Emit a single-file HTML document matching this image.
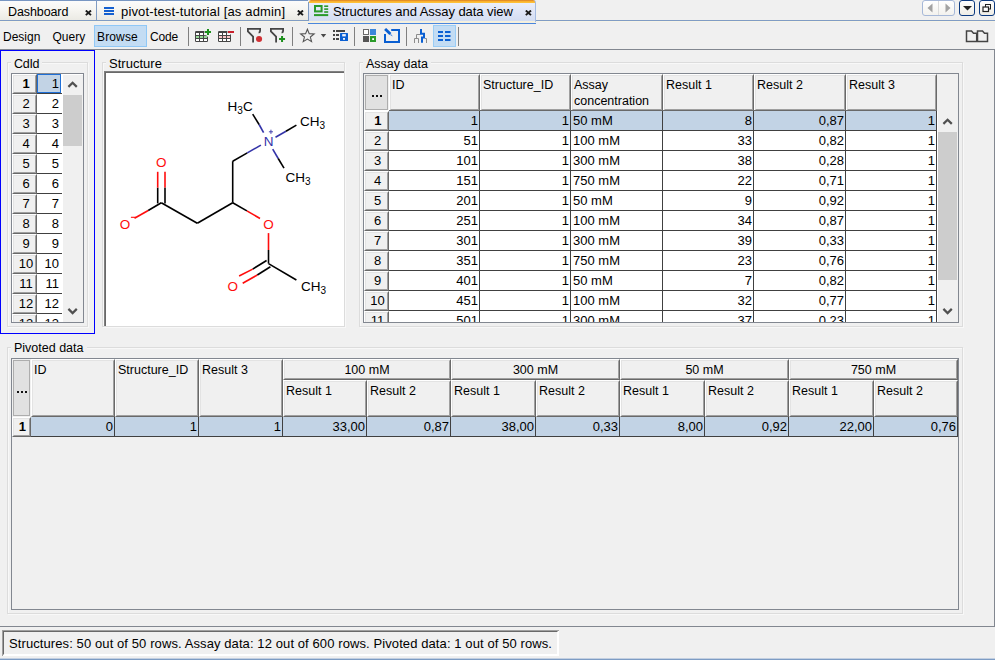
<!DOCTYPE html><html><head><meta charset="utf-8"><title>Structures and Assay data view</title><style>
*{box-sizing:border-box;margin:0;padding:0}
html,body{width:995px;height:660px;overflow:hidden;background:#f0f0f0}
body{font-family:"Liberation Sans",sans-serif;font-size:13px;color:#000;position:relative}
.a{position:absolute}
.t{position:absolute;white-space:pre;line-height:16px;height:16px}
.hl{position:absolute;height:1px}
.vl{position:absolute;width:1px}
.rh{position:absolute;background:#f0f0f0;border-top:1px solid #fff;border-left:1px solid #fff;border-right:1px solid #696969;border-bottom:1px solid #696969}
.rh:before{content:"";position:absolute;left:0;top:0;right:0;bottom:0;border-top:1px solid #e3e3e3;border-left:1px solid #e3e3e3;border-right:1px solid #a0a0a0;border-bottom:1px solid #a0a0a0}
.rh span{position:absolute;left:0;right:0;text-align:center;white-space:pre}
.sel{position:absolute;background:#c2d3e5}
.num{position:absolute;text-align:right;white-space:pre;line-height:16px;height:16px}
.sep{position:absolute;width:1px;background:#808080;top:27px;height:19px}
</style></head><body>
<div class="a" style="left:0;top:0;width:308px;height:20px;background:linear-gradient(#fcfcfc,#f6f5f1 50%,#ebeae4)"></div>
<div class="hl" style="left:0;top:0;width:308px;background:#7896c2"></div>
<div class="hl" style="left:0;top:20px;width:308px;background:#809cc4"></div>
<div class="hl" style="left:536px;top:20px;width:459px;background:#809cc4"></div>
<div class="hl" style="left:0;top:21px;width:995px;background:#f7f4e6"></div>
<div class="vl" style="left:96px;top:0;height:20px;background:#809cc4"></div>
<div class="a" style="left:308px;top:0;width:228px;height:22px;border-radius:3px 3px 0 0;background:linear-gradient(#df8826 0,#e8952a 1px,#fdb830 1.6px,#fdc43c 3px,#eaeefa 3px,#dfe5f6 12px,#d3ddf2 21px,#f5f0dc 21px);border-left:1px solid #e4e9f7;border-right:1px solid #a4bbe2"></div>
<div class="vl" style="left:308px;top:2px;height:19px;background:#7e9bc3"></div>
<div class="hl" style="left:308px;top:23px;width:228px;height:1px;background:#4a86dc"></div>
<div class="hl" style="left:308px;top:22px;width:228px;height:1px;background:#f4efdf"></div>
<div class="t" style="left:8px;top:3.5px;font-size:12.5px;letter-spacing:-0.1px">Dashboard</div>
<div class="t" style="left:121px;top:3.5px;font-size:13px;letter-spacing:0.15px">pivot-test-tutorial [as admin]</div>
<div class="t" style="left:333px;top:3.5px;font-size:13px;letter-spacing:-0.05px">Structures and Assay data view</div>
<svg class="a" style="left:85.0px;top:9.9px" width="7" height="6" viewBox="0 0 7 6"><path d="M0.8 0.5L6.0 5.1M6.0 0.5L0.8 5.1" stroke="#1a1a1a" stroke-width="1.9" fill="none"/></svg>
<svg class="a" style="left:297.0px;top:9.9px" width="7" height="6" viewBox="0 0 7 6"><path d="M0.8 0.5L6.0 5.1M6.0 0.5L0.8 5.1" stroke="#1a1a1a" stroke-width="1.9" fill="none"/></svg>
<svg class="a" style="left:524.8px;top:9.9px" width="7" height="6" viewBox="0 0 7 6"><path d="M0.8 0.5L6.0 5.1M6.0 0.5L0.8 5.1" stroke="#1a1a1a" stroke-width="1.9" fill="none"/></svg>
<svg class="a" style="left:104px;top:7px" width="10" height="8"><rect x="0" y="0" width="10" height="2" fill="#1560d0"/><rect x="0" y="3" width="10" height="2" fill="#1560d0"/><rect x="0" y="6" width="10" height="2" fill="#1560d0"/></svg>
<svg class="a" style="left:314px;top:5px" width="15" height="12"><rect x="1" y="1" width="6.6" height="5.4" fill="none" stroke="#2a9a2a" stroke-width="2"/><rect x="10.2" y="0.4" width="4" height="1.6" fill="#2a9a2a"/><rect x="10.2" y="3.3" width="4" height="1.6" fill="#2a9a2a"/><rect x="10.2" y="6.2" width="4" height="1.6" fill="#2a9a2a"/><rect x="0" y="9.1" width="14.2" height="2" fill="#2a9a2a"/></svg>
<div class="a" style="left:922px;top:0;width:33px;height:16px;border:1px solid #a6b8d8;border-radius:3px;background:linear-gradient(#fff,#f3f2ee)"></div>
<div class="vl" style="left:938px;top:1px;height:14px;background:#dcdcdc"></div>
<svg class="a" style="left:927px;top:3px" width="6" height="10"><path d="M5.5 0.5L0.5 5L5.5 9.5Z" fill="#a2a2a2"/></svg>
<svg class="a" style="left:945px;top:3px" width="6" height="10"><path d="M0.5 0.5L5.5 5L0.5 9.5Z" fill="#a2a2a2"/></svg>
<div class="a" style="left:959px;top:0;width:16px;height:16px;border:1px solid #0c3a80;border-radius:3px;background:linear-gradient(#fff,#efede6)"></div>
<svg class="a" style="left:962.5px;top:6px" width="9" height="5"><path d="M0 0H9L4.5 4.5Z" fill="#222"/></svg>
<div class="a" style="left:979px;top:0;width:16px;height:16px;border:1px solid #0c3a80;border-radius:3px;background:linear-gradient(#fff,#efede6)"></div>
<svg class="a" style="left:982px;top:3px" width="10" height="10"><rect x="3.5" y="1.5" width="5" height="4.5" fill="none" stroke="#222" stroke-width="1"/><rect x="1" y="4" width="5.5" height="4.5" fill="#fff" stroke="#222" stroke-width="1.2"/></svg>
<div class="hl" style="left:0;top:49px;width:995px;background:#828790"></div>
<div class="a" style="left:94px;top:25px;width:53px;height:22px;background:#c3dcf3;border:1px solid #90c8f6"></div>
<div class="t" style="left:3px;top:29px;font-size:12px">Design</div>
<div class="t" style="left:52.5px;top:29px;font-size:12px">Query</div>
<div class="t" style="left:97px;top:29px;font-size:12px;letter-spacing:0.15px">Browse</div>
<div class="t" style="left:150px;top:29px;font-size:12px;letter-spacing:-0.2px">Code</div>
<div class="sep" style="left:188px"></div>
<div class="sep" style="left:240px"></div>
<div class="sep" style="left:292px"></div>
<div class="sep" style="left:354px"></div>
<div class="sep" style="left:406px"></div>
<div class="sep" style="left:458px"></div>
<svg class="a" style="left:195px;top:29px" width="17" height="14" viewBox="0 0 17 14"><rect x="0" y="2" width="13" height="11" rx="1.2" fill="#454545"/><rect x="1" y="4" width="3" height="2" fill="#fff"/><rect x="1" y="7" width="3" height="2" fill="#98d898"/><rect x="1" y="10" width="3" height="2" fill="#fff"/><rect x="5" y="4" width="3" height="2" fill="#fff"/><rect x="5" y="7" width="3" height="2" fill="#98d898"/><rect x="5" y="10" width="3" height="2" fill="#fff"/><rect x="9" y="4" width="3" height="2" fill="#fff"/><rect x="9" y="7" width="3" height="2" fill="#98d898"/><rect x="9" y="10" width="3" height="2" fill="#fff"/><path d="M9.4 0H17V8.4H13.4L11.2 6.3H9.4Z" fill="#f0f0f0"/><path d="M13 0V6M10 3H16" stroke="#1c8f1c" stroke-width="2" fill="none"/></svg>
<svg class="a" style="left:218px;top:29px" width="17" height="14" viewBox="0 0 17 14"><rect x="0" y="2" width="13" height="11" rx="1.2" fill="#454545"/><rect x="1" y="4" width="3" height="2" fill="#fff"/><rect x="1" y="7" width="3" height="2" fill="#f8c6c6"/><rect x="1" y="10" width="3" height="2" fill="#fff"/><rect x="5" y="4" width="3" height="2" fill="#fff"/><rect x="5" y="7" width="3" height="2" fill="#f8c6c6"/><rect x="5" y="10" width="3" height="2" fill="#fff"/><rect x="9" y="4" width="3" height="2" fill="#fff"/><rect x="9" y="7" width="3" height="2" fill="#f8c6c6"/><rect x="9" y="10" width="3" height="2" fill="#fff"/><path d="M9.4 0H17V6.4H13.2L12.2 5H9.4Z" fill="#f0f0f0"/><rect x="10" y="2" width="6" height="2" fill="#c8202c"/></svg>
<svg class="a" style="left:247px;top:28px" width="17" height="16" viewBox="0 0 17 16"><path d="M11.6 4.7C13.3 4.5 13.1 3.4 13.1 2.8V0.9H0.9V3.3L6.1 8.5V14.4" stroke="#454545" stroke-width="1.8" fill="none" stroke-linejoin="miter"/><circle cx="12.05" cy="10.95" r="3.05" fill="#d03034"/></svg>
<svg class="a" style="left:270px;top:28px" width="17" height="16" viewBox="0 0 17 16"><path d="M11.6 4.7C13.3 4.5 13.1 3.4 13.1 2.8V0.9H0.9V3.3L6.1 8.5V14.4" stroke="#454545" stroke-width="1.8" fill="none" stroke-linejoin="miter"/><path d="M12.05 8V14M9.05 11H15.05" stroke="#1c8f1c" stroke-width="2" fill="none"/></svg>
<svg class="a" style="left:299px;top:28px" width="17" height="16" viewBox="0 0 17 16"><path d="M8.40 1.21L10.22 5.67L15.15 5.97L11.35 9.03L12.57 13.67L8.40 11.11L4.23 13.67L5.45 9.03L1.65 5.97L6.58 5.67Z" fill="none" stroke="#555" stroke-width="1.1" stroke-linejoin="miter"/></svg>
<svg class="a" style="left:320px;top:33px" width="7" height="6" viewBox="0 0 7 6"><path d="M0.8 1.1H6.2L3.5 4.4Z" fill="#4a4a4a"/></svg>
<svg class="a" style="left:333px;top:30px" width="16" height="11" viewBox="0 0 16 11"><rect x="0" y="0" width="2" height="2" fill="#454545"/><rect x="3" y="0" width="9" height="2" fill="#454545"/><rect x="0" y="4" width="2" height="2" fill="#454545"/><rect x="3" y="4" width="3" height="2" fill="#454545"/><rect x="0" y="8" width="2" height="2" fill="#454545"/><rect x="3" y="8" width="3" height="2" fill="#454545"/><rect x="7" y="3" width="8" height="8" rx="0.5" fill="#0a5fd2"/><rect x="9.2" y="4.1" width="3.6" height="2.3" fill="#eef3fc"/><rect x="10" y="8" width="2" height="1.8" fill="#eef3fc"/></svg>
<svg class="a" style="left:363px;top:29px" width="13" height="13" viewBox="0 0 13 13"><rect x="0.5" y="0.5" width="5" height="5" fill="#fff" stroke="#6a6a6a" stroke-width="1"/><rect x="7" y="0" width="6" height="6" fill="#3b86da"/><rect x="0" y="7" width="6" height="6" fill="#555"/><rect x="7" y="7" width="6" height="6" fill="#2a9a2a"/><rect x="9.2" y="9.2" width="1.8" height="1.8" fill="#fff"/></svg>
<svg class="a" style="left:384px;top:28px" width="17" height="16" viewBox="0 0 17 16"><path d="M7.2 2H15V14H1V6" stroke="#0a5fd2" stroke-width="2" fill="none"/><path d="M1.1 1.0L6.4 6.0" stroke="#0a5fd2" stroke-width="2.9" fill="none"/><path d="M6.9 6.1L8.9 8.6L6.1 6.9Z" fill="#2f7be0"/></svg>
<svg class="a" style="left:414px;top:29px" width="13" height="14" viewBox="0 0 13 14"><path d="M0.5 14V9.5H4.5V14M2.5 9.5V5.5H6M11 9.5H12.5V14" stroke="#8c8c8c" stroke-width="1" fill="none"/><path d="M7 0V5.8M6 4.8H11M10 4.8V9.6M11 8.6H7M8 8V13.8" stroke="#0a5fd2" stroke-width="2" fill="none"/></svg>
<div class="a" style="left:433px;top:25px;width:23px;height:22px;background:#c3dcf3;border:1px solid #9acdf6"></div>
<svg class="a" style="left:438px;top:31px" width="13" height="10" viewBox="0 0 13 10"><rect x="0" y="0" width="5" height="2" fill="#0a5fd2"/><rect x="7" y="0" width="5.5" height="2" fill="#0a5fd2"/><rect x="0" y="4" width="5" height="2" fill="#0a5fd2"/><rect x="7" y="4" width="5.5" height="2" fill="#0a5fd2"/><rect x="0" y="8" width="5" height="2" fill="#0a5fd2"/><rect x="7" y="8" width="5.5" height="2" fill="#0a5fd2"/></svg>
<svg class="a" style="left:965px;top:29px" width="24" height="14" viewBox="0 0 24 14"><path d="M1.5 2H6.5L8.5 4.2H11.7V12.5H1.5ZM12.5 2H17.5L19.5 4.2H22.5V12.5H12.5Z" fill="none" stroke="#444" stroke-width="1.5" stroke-linejoin="miter"/></svg>
<div class="a" style="left:0;top:50px;width:95px;height:284px;border:1px solid #0000ff"></div>
<div class="a" style="left:7px;top:62px;width:81px;height:265px;border:1px solid #dcdcdc;box-shadow:1px 1px 0 #f8f8f8, inset 1px 1px 0 #f8f8f8"></div>
<div class="a" style="left:11px;top:55.5px;width:31px;height:14px;background:#f0f0f0"></div>
<div class="t" style="left:14px;top:55.5px;font-size:12.5px;letter-spacing:-0.3px">CdId</div>
<div class="a" style="left:11px;top:73px;width:73px;height:250px;border:1px solid #828790;background:#fff;overflow:hidden"><div class="a" id="cd" style="left:0;top:0;width:71px;height:248px">
<div class="rh" style="left:0;top:0px;width:25px;height:20px"><span style="top:0.5px;left:3px;line-height:16px;font-weight:bold;">1</span></div>
<div class="a" style="left:25px;top:0px;width:24px;height:19px;background:#c2d3e5;border:1px solid #1f6fd6"></div>
<div class="hl" style="left:25px;top:19px;width:25px;background:#404040"></div>
<div class="num" style="left:25px;top:1.5px;width:22px">1</div>
<div class="rh" style="left:0;top:20px;width:25px;height:20px"><span style="top:0.5px;left:3px;line-height:16px;">2</span></div>
<div class="hl" style="left:25px;top:39px;width:25px;background:#404040"></div>
<div class="num" style="left:25px;top:21.5px;width:22px">2</div>
<div class="rh" style="left:0;top:40px;width:25px;height:20px"><span style="top:0.5px;left:3px;line-height:16px;">3</span></div>
<div class="hl" style="left:25px;top:59px;width:25px;background:#404040"></div>
<div class="num" style="left:25px;top:41.5px;width:22px">3</div>
<div class="rh" style="left:0;top:60px;width:25px;height:20px"><span style="top:0.5px;left:3px;line-height:16px;">4</span></div>
<div class="hl" style="left:25px;top:79px;width:25px;background:#404040"></div>
<div class="num" style="left:25px;top:61.5px;width:22px">4</div>
<div class="rh" style="left:0;top:80px;width:25px;height:20px"><span style="top:0.5px;left:3px;line-height:16px;">5</span></div>
<div class="hl" style="left:25px;top:99px;width:25px;background:#404040"></div>
<div class="num" style="left:25px;top:81.5px;width:22px">5</div>
<div class="rh" style="left:0;top:100px;width:25px;height:20px"><span style="top:0.5px;left:3px;line-height:16px;">6</span></div>
<div class="hl" style="left:25px;top:119px;width:25px;background:#404040"></div>
<div class="num" style="left:25px;top:101.5px;width:22px">6</div>
<div class="rh" style="left:0;top:120px;width:25px;height:20px"><span style="top:0.5px;left:3px;line-height:16px;">7</span></div>
<div class="hl" style="left:25px;top:139px;width:25px;background:#404040"></div>
<div class="num" style="left:25px;top:121.5px;width:22px">7</div>
<div class="rh" style="left:0;top:140px;width:25px;height:20px"><span style="top:0.5px;left:3px;line-height:16px;">8</span></div>
<div class="hl" style="left:25px;top:159px;width:25px;background:#404040"></div>
<div class="num" style="left:25px;top:141.5px;width:22px">8</div>
<div class="rh" style="left:0;top:160px;width:25px;height:20px"><span style="top:0.5px;left:3px;line-height:16px;">9</span></div>
<div class="hl" style="left:25px;top:179px;width:25px;background:#404040"></div>
<div class="num" style="left:25px;top:161.5px;width:22px">9</div>
<div class="rh" style="left:0;top:180px;width:25px;height:20px"><span style="top:0.5px;left:3px;line-height:16px;">10</span></div>
<div class="hl" style="left:25px;top:199px;width:25px;background:#404040"></div>
<div class="num" style="left:25px;top:181.5px;width:22px">10</div>
<div class="rh" style="left:0;top:200px;width:25px;height:20px"><span style="top:0.5px;left:3px;line-height:16px;">11</span></div>
<div class="hl" style="left:25px;top:219px;width:25px;background:#404040"></div>
<div class="num" style="left:25px;top:201.5px;width:22px">11</div>
<div class="rh" style="left:0;top:220px;width:25px;height:20px"><span style="top:0.5px;left:3px;line-height:16px;">12</span></div>
<div class="hl" style="left:25px;top:239px;width:25px;background:#404040"></div>
<div class="num" style="left:25px;top:221.5px;width:22px">12</div>
<div class="rh" style="left:0;top:240px;width:25px;height:20px"><span style="top:0.5px;left:3px;line-height:16px;">13</span></div>
<div class="hl" style="left:25px;top:259px;width:25px;background:#404040"></div>
<div class="num" style="left:25px;top:241.5px;width:22px">13</div>
<div class="a" style="left:51px;top:1px;width:20px;height:247px;background:#f0f0f0"></div>
<div class="a" style="left:51px;top:21px;width:19px;height:51px;background:#cdcdcd"></div>
<svg class="a" style="left:55px;top:6px" width="12" height="9"><path d="M1.4 6.9L5.6 2.7L9.8 6.9" stroke="#505050" stroke-width="2.2" fill="none" stroke-linejoin="miter"/></svg>
<svg class="a" style="left:55px;top:232px" width="12" height="9"><path d="M1.4 2.9L5.6 7.1L9.8 2.9" stroke="#505050" stroke-width="2.2" fill="none" stroke-linejoin="miter"/></svg>
</div></div>
<div class="a" style="left:102px;top:62px;width:243px;height:265px;border:1px solid #dcdcdc;box-shadow:1px 1px 0 #f8f8f8, inset 1px 1px 0 #f8f8f8"></div>
<div class="a" style="left:106px;top:55.5px;width:59px;height:14px;background:#f0f0f0"></div>
<div class="t" style="left:109px;top:55.5px;font-size:13px;letter-spacing:0.02px">Structure</div>
<div class="a" style="left:104px;top:71px;width:240px;height:255px;background:#fff;border-left:1px solid #808080;border-top:1px solid #808080"></div>
<div class="vl" style="left:105px;top:72px;height:254px;background:#696969"></div>
<div class="hl" style="left:105px;top:72px;width:239px;background:#696969"></div>
<svg class="a" style="left:106px;top:73px" width="238" height="253" viewBox="106 73 238 253" font-family="Liberation Sans, sans-serif">
<g stroke-width="1.6" stroke-linecap="butt" fill="none">
<path d="M157.7 203.4L157.7 187.6" stroke="#000"/>
<path d="M157.7 187.6L157.7 171.8" stroke="#ff0d0d"/>
<path d="M165.0 203.4L165.0 187.6" stroke="#000"/>
<path d="M165.0 187.6L165.0 171.8" stroke="#ff0d0d"/>
<path d="M161.3 202.7L148.2 210.5" stroke="#000"/>
<path d="M148.2 210.5L134.5 218.2" stroke="#ff0d0d"/>
<path d="M161.3 202.7L197.3 223.3" stroke="#000"/>
<path d="M197.3 223.3L232.7 202.7" stroke="#000"/>
<path d="M232.7 202.7L232.7 161.2" stroke="#000"/>
<path d="M232.7 161.2L247.3 152.9" stroke="#000"/>
<path d="M247.3 152.9L260.9 145.1" stroke="#3333a8"/>
<path d="M263.6 132.7L259.1 124.5" stroke="#3333a8"/>
<path d="M259.1 124.5L252.7 114.2" stroke="#000"/>
<path d="M275.5 137.3L286.0 131.3" stroke="#3333a8"/>
<path d="M286.0 131.3L296.4 125.1" stroke="#000"/>
<path d="M272.7 149.1L278.2 158.5" stroke="#3333a8"/>
<path d="M278.2 158.5L284.0 168.2" stroke="#000"/>
<path d="M232.7 202.7L246.9 210.9" stroke="#000"/>
<path d="M246.9 210.9L260.0 218.5" stroke="#ff0d0d"/>
<path d="M268.5 233.1L268.5 250.0" stroke="#ff0d0d"/>
<path d="M268.5 250.0L268.5 263.6" stroke="#000"/>
<path d="M266.6 260.5L252.7 269.1" stroke="#000"/>
<path d="M252.7 269.1L239.1 276.0" stroke="#ff0d0d"/>
<path d="M270.4 266.7L257.3 275.0" stroke="#000"/>
<path d="M257.3 275.0L242.7 283.3" stroke="#ff0d0d"/>
<path d="M268.5 263.6L296.4 280.0" stroke="#000"/>
</g>
<text x="161.3" y="166.7" text-anchor="middle" font-size="13.5" fill="#ff0d0d">O</text>
<text x="125.1" y="228.5" text-anchor="middle" font-size="13.5" fill="#ff0d0d">O</text>
<text x="268.5" y="228.7" text-anchor="middle" font-size="13.5" fill="#ff0d0d">O</text>
<text x="232.7" y="290.5" text-anchor="middle" font-size="13.5" fill="#ff0d0d">O</text>
<text x="268.5" y="146.3" text-anchor="middle" font-size="13.5" fill="#3333a8">N</text>
<path d="M130.9 217.3H136" stroke="#ff0d0d" stroke-width="1.1"/>
<path d="M268.9 131.8H273M270.95 129.7V133.9" stroke="#3333a8" stroke-width="0.9" fill="none"/>
<text x="227.6" y="110.9" font-size="13.5" fill="#000">H<tspan dy="3" font-size="10">3</tspan><tspan dy="-3">C</tspan></text>
<text x="300.0" y="126.3" font-size="13.5" fill="#000">CH<tspan dy="3" font-size="10">3</tspan></text>
<text x="285.5" y="181.8" font-size="13.5" fill="#000">CH<tspan dy="3" font-size="10">3</tspan></text>
<text x="301.0" y="290.9" font-size="13.5" fill="#000">CH<tspan dy="3" font-size="10">3</tspan></text>
</svg>
<div class="a" style="left:359px;top:62px;width:604px;height:265px;border:1px solid #dcdcdc;box-shadow:1px 1px 0 #f8f8f8, inset 1px 1px 0 #f8f8f8"></div>
<div class="a" style="left:363px;top:55.5px;width:68px;height:14px;background:#f0f0f0"></div>
<div class="t" style="left:366px;top:55.5px;font-size:12.5px;letter-spacing:0px">Assay data</div>
<div class="a" style="left:363px;top:73px;width:596px;height:250px;border:1px solid #828790;background:#fff;overflow:hidden"><div class="a" style="left:0;top:0;width:594px;height:248px">
<div class="a" style="left:0;top:0;width:594px;height:37px;background:#f0f0f0"></div>
<div class="a" style="left:1px;top:1px;width:23px;height:35px;background:#e1e1e1;border:1px solid #adadad"></div>
<div class="a" style="left:8px;top:21px;width:2px;height:2px;background:#111"></div>
<div class="a" style="left:12px;top:21px;width:2px;height:2px;background:#111"></div>
<div class="a" style="left:16px;top:21px;width:2px;height:2px;background:#111"></div>
<div class="hl" style="left:0;top:36px;width:25px;background:#fff"></div>
<div class="rh" style="left:25px;top:0;width:91px;height:37px"></div>
<div class="t" style="left:28px;top:3px;font-size:12.5px">ID</div>
<div class="rh" style="left:116px;top:0;width:91px;height:37px"></div>
<div class="t" style="left:119px;top:3px;font-size:12.5px">Structure_ID</div>
<div class="rh" style="left:207px;top:0;width:92px;height:37px"></div>
<div class="t" style="left:210px;top:3px;font-size:12.5px">Assay</div>
<div class="t" style="left:210px;top:19px;font-size:12.5px">concentration</div>
<div class="rh" style="left:299px;top:0;width:91px;height:37px"></div>
<div class="t" style="left:302px;top:3px;font-size:12.5px">Result 1</div>
<div class="rh" style="left:390px;top:0;width:92px;height:37px"></div>
<div class="t" style="left:393px;top:3px;font-size:12.5px">Result 2</div>
<div class="rh" style="left:482px;top:0;width:91px;height:37px"></div>
<div class="t" style="left:485px;top:3px;font-size:12.5px">Result 3</div>
<div class="rh" style="left:0;top:37px;width:25px;height:20px"><span style="top:0.5px;left:2.5px;line-height:16px;font-weight:bold;">1</span></div>
<div class="sel" style="left:25px;top:37px;width:548px;height:19px"></div>
<div class="hl" style="left:25px;top:56px;width:548px;background:#404040"></div>
<div class="num" style="left:25px;top:38.5px;width:89px">1</div>
<div class="num" style="left:116px;top:38.5px;width:89px">1</div>
<div class="t" style="left:209px;top:38.5px">50 mM</div>
<div class="num" style="left:299px;top:38.5px;width:89px">8</div>
<div class="num" style="left:390px;top:38.5px;width:90px">0,87</div>
<div class="num" style="left:482px;top:38.5px;width:89px">1</div>
<div class="rh" style="left:0;top:57px;width:25px;height:20px"><span style="top:0.5px;left:2px;line-height:16px;">2</span></div>
<div class="hl" style="left:25px;top:76px;width:548px;background:#404040"></div>
<div class="num" style="left:25px;top:58.5px;width:89px">51</div>
<div class="num" style="left:116px;top:58.5px;width:89px">1</div>
<div class="t" style="left:209px;top:58.5px">100 mM</div>
<div class="num" style="left:299px;top:58.5px;width:89px">33</div>
<div class="num" style="left:390px;top:58.5px;width:90px">0,82</div>
<div class="num" style="left:482px;top:58.5px;width:89px">1</div>
<div class="rh" style="left:0;top:77px;width:25px;height:20px"><span style="top:0.5px;left:2px;line-height:16px;">3</span></div>
<div class="hl" style="left:25px;top:96px;width:548px;background:#404040"></div>
<div class="num" style="left:25px;top:78.5px;width:89px">101</div>
<div class="num" style="left:116px;top:78.5px;width:89px">1</div>
<div class="t" style="left:209px;top:78.5px">300 mM</div>
<div class="num" style="left:299px;top:78.5px;width:89px">38</div>
<div class="num" style="left:390px;top:78.5px;width:90px">0,28</div>
<div class="num" style="left:482px;top:78.5px;width:89px">1</div>
<div class="rh" style="left:0;top:97px;width:25px;height:20px"><span style="top:0.5px;left:2px;line-height:16px;">4</span></div>
<div class="hl" style="left:25px;top:116px;width:548px;background:#404040"></div>
<div class="num" style="left:25px;top:98.5px;width:89px">151</div>
<div class="num" style="left:116px;top:98.5px;width:89px">1</div>
<div class="t" style="left:209px;top:98.5px">750 mM</div>
<div class="num" style="left:299px;top:98.5px;width:89px">22</div>
<div class="num" style="left:390px;top:98.5px;width:90px">0,71</div>
<div class="num" style="left:482px;top:98.5px;width:89px">1</div>
<div class="rh" style="left:0;top:117px;width:25px;height:20px"><span style="top:0.5px;left:2px;line-height:16px;">5</span></div>
<div class="hl" style="left:25px;top:136px;width:548px;background:#404040"></div>
<div class="num" style="left:25px;top:118.5px;width:89px">201</div>
<div class="num" style="left:116px;top:118.5px;width:89px">1</div>
<div class="t" style="left:209px;top:118.5px">50 mM</div>
<div class="num" style="left:299px;top:118.5px;width:89px">9</div>
<div class="num" style="left:390px;top:118.5px;width:90px">0,92</div>
<div class="num" style="left:482px;top:118.5px;width:89px">1</div>
<div class="rh" style="left:0;top:137px;width:25px;height:20px"><span style="top:0.5px;left:2px;line-height:16px;">6</span></div>
<div class="hl" style="left:25px;top:156px;width:548px;background:#404040"></div>
<div class="num" style="left:25px;top:138.5px;width:89px">251</div>
<div class="num" style="left:116px;top:138.5px;width:89px">1</div>
<div class="t" style="left:209px;top:138.5px">100 mM</div>
<div class="num" style="left:299px;top:138.5px;width:89px">34</div>
<div class="num" style="left:390px;top:138.5px;width:90px">0,87</div>
<div class="num" style="left:482px;top:138.5px;width:89px">1</div>
<div class="rh" style="left:0;top:157px;width:25px;height:20px"><span style="top:0.5px;left:2px;line-height:16px;">7</span></div>
<div class="hl" style="left:25px;top:176px;width:548px;background:#404040"></div>
<div class="num" style="left:25px;top:158.5px;width:89px">301</div>
<div class="num" style="left:116px;top:158.5px;width:89px">1</div>
<div class="t" style="left:209px;top:158.5px">300 mM</div>
<div class="num" style="left:299px;top:158.5px;width:89px">39</div>
<div class="num" style="left:390px;top:158.5px;width:90px">0,33</div>
<div class="num" style="left:482px;top:158.5px;width:89px">1</div>
<div class="rh" style="left:0;top:177px;width:25px;height:20px"><span style="top:0.5px;left:2px;line-height:16px;">8</span></div>
<div class="hl" style="left:25px;top:196px;width:548px;background:#404040"></div>
<div class="num" style="left:25px;top:178.5px;width:89px">351</div>
<div class="num" style="left:116px;top:178.5px;width:89px">1</div>
<div class="t" style="left:209px;top:178.5px">750 mM</div>
<div class="num" style="left:299px;top:178.5px;width:89px">23</div>
<div class="num" style="left:390px;top:178.5px;width:90px">0,76</div>
<div class="num" style="left:482px;top:178.5px;width:89px">1</div>
<div class="rh" style="left:0;top:197px;width:25px;height:20px"><span style="top:0.5px;left:2px;line-height:16px;">9</span></div>
<div class="hl" style="left:25px;top:216px;width:548px;background:#404040"></div>
<div class="num" style="left:25px;top:198.5px;width:89px">401</div>
<div class="num" style="left:116px;top:198.5px;width:89px">1</div>
<div class="t" style="left:209px;top:198.5px">50 mM</div>
<div class="num" style="left:299px;top:198.5px;width:89px">7</div>
<div class="num" style="left:390px;top:198.5px;width:90px">0,82</div>
<div class="num" style="left:482px;top:198.5px;width:89px">1</div>
<div class="rh" style="left:0;top:217px;width:25px;height:20px"><span style="top:0.5px;left:2px;line-height:16px;">10</span></div>
<div class="hl" style="left:25px;top:236px;width:548px;background:#404040"></div>
<div class="num" style="left:25px;top:218.5px;width:89px">451</div>
<div class="num" style="left:116px;top:218.5px;width:89px">1</div>
<div class="t" style="left:209px;top:218.5px">100 mM</div>
<div class="num" style="left:299px;top:218.5px;width:89px">32</div>
<div class="num" style="left:390px;top:218.5px;width:90px">0,77</div>
<div class="num" style="left:482px;top:218.5px;width:89px">1</div>
<div class="rh" style="left:0;top:237px;width:25px;height:20px"><span style="top:0.5px;left:2px;line-height:16px;">11</span></div>
<div class="hl" style="left:25px;top:256px;width:548px;background:#404040"></div>
<div class="num" style="left:25px;top:238.5px;width:89px">501</div>
<div class="num" style="left:116px;top:238.5px;width:89px">1</div>
<div class="t" style="left:209px;top:238.5px">300 mM</div>
<div class="num" style="left:299px;top:238.5px;width:89px">37</div>
<div class="num" style="left:390px;top:238.5px;width:90px">0,23</div>
<div class="num" style="left:482px;top:238.5px;width:89px">1</div>
<div class="vl" style="left:115px;top:37px;height:211px;background:#404040"></div>
<div class="vl" style="left:206px;top:37px;height:211px;background:#404040"></div>
<div class="vl" style="left:298px;top:37px;height:211px;background:#404040"></div>
<div class="vl" style="left:389px;top:37px;height:211px;background:#404040"></div>
<div class="vl" style="left:481px;top:37px;height:211px;background:#404040"></div>
<div class="vl" style="left:572px;top:37px;height:211px;background:#404040"></div>
<div class="hl" style="left:25px;top:36px;width:548px;background:#696969"></div>
<div class="a" style="left:574px;top:37px;width:20px;height:211px;background:#f0f0f0"></div>
<div class="a" style="left:573px;top:0px;width:21px;height:37px;background:#f0f0f0"></div>
<div class="a" style="left:574px;top:58px;width:19px;height:148px;background:#cdcdcd"></div>
<svg class="a" style="left:578px;top:43px" width="12" height="9"><path d="M1.4 6.9L5.6 2.7L9.8 6.9" stroke="#505050" stroke-width="2.2" fill="none" stroke-linejoin="miter"/></svg>
<svg class="a" style="left:578px;top:232px" width="12" height="9"><path d="M1.4 2.9L5.6 7.1L9.8 2.9" stroke="#505050" stroke-width="2.2" fill="none" stroke-linejoin="miter"/></svg>
</div></div>
<div class="a" style="left:7px;top:347px;width:956px;height:267px;border:1px solid #dcdcdc;box-shadow:1px 1px 0 #f8f8f8, inset 1px 1px 0 #f8f8f8"></div>
<div class="a" style="left:11px;top:340px;width:76px;height:14px;background:#f0f0f0"></div>
<div class="t" style="left:14px;top:340px;font-size:12.5px;letter-spacing:0px">Pivoted data</div>
<div class="a" style="left:11px;top:358px;width:948px;height:252px;border:1px solid #828790;background:#f0f0f0;overflow:hidden"><div class="a" style="left:0;top:0;width:946px;height:250px">
<div class="a" style="left:1px;top:1px;width:17px;height:56px;background:#e1e1e1;border:1px solid #adadad"></div>
<div class="a" style="left:5px;top:32px;width:2px;height:2px;background:#111"></div>
<div class="a" style="left:9px;top:32px;width:2px;height:2px;background:#111"></div>
<div class="a" style="left:13px;top:32px;width:2px;height:2px;background:#111"></div>
<div class="rh" style="left:19px;top:0;width:84px;height:58px"></div>
<div class="t" style="left:22px;top:3px;font-size:12.5px">ID</div>
<div class="rh" style="left:103px;top:0;width:84px;height:58px"></div>
<div class="t" style="left:106px;top:3px;font-size:12.5px">Structure_ID</div>
<div class="rh" style="left:187px;top:0;width:84px;height:58px"></div>
<div class="t" style="left:190px;top:3px;font-size:12.5px">Result 3</div>
<div class="rh" style="left:271px;top:0;width:168px;height:21px"><span style="top:2px;line-height:16px;font-size:12.5px">100 mM</span></div>
<div class="rh" style="left:271px;top:21px;width:84px;height:37px"></div>
<div class="t" style="left:274px;top:24px;font-size:12.5px">Result 1</div>
<div class="rh" style="left:355px;top:21px;width:84px;height:37px"></div>
<div class="t" style="left:358px;top:24px;font-size:12.5px">Result 2</div>
<div class="rh" style="left:439px;top:0;width:169px;height:21px"><span style="top:2px;line-height:16px;font-size:12.5px">300 mM</span></div>
<div class="rh" style="left:439px;top:21px;width:85px;height:37px"></div>
<div class="t" style="left:442px;top:24px;font-size:12.5px">Result 1</div>
<div class="rh" style="left:524px;top:21px;width:84px;height:37px"></div>
<div class="t" style="left:527px;top:24px;font-size:12.5px">Result 2</div>
<div class="rh" style="left:608px;top:0;width:169px;height:21px"><span style="top:2px;line-height:16px;font-size:12.5px">50 mM</span></div>
<div class="rh" style="left:608px;top:21px;width:85px;height:37px"></div>
<div class="t" style="left:611px;top:24px;font-size:12.5px">Result 1</div>
<div class="rh" style="left:693px;top:21px;width:84px;height:37px"></div>
<div class="t" style="left:696px;top:24px;font-size:12.5px">Result 2</div>
<div class="rh" style="left:777px;top:0;width:169px;height:21px"><span style="top:2px;line-height:16px;font-size:12.5px">750 mM</span></div>
<div class="rh" style="left:777px;top:21px;width:85px;height:37px"></div>
<div class="t" style="left:780px;top:24px;font-size:12.5px">Result 1</div>
<div class="rh" style="left:862px;top:21px;width:84px;height:37px"></div>
<div class="t" style="left:865px;top:24px;font-size:12.5px">Result 2</div>
<div class="rh" style="left:0;top:58px;width:19px;height:20px"><span style="top:0.5px;left:1.5px;line-height:16px;font-weight:bold">1</span></div>
<div class="sel" style="left:19px;top:58px;width:927px;height:19px"></div>
<div class="hl" style="left:19px;top:77px;width:927px;background:#404040"></div>
<div class="num" style="left:19px;top:59.5px;width:82px">0</div>
<div class="vl" style="left:102px;top:58px;height:19px;background:#404040"></div>
<div class="num" style="left:103px;top:59.5px;width:82px">1</div>
<div class="vl" style="left:186px;top:58px;height:19px;background:#404040"></div>
<div class="num" style="left:187px;top:59.5px;width:82px">1</div>
<div class="vl" style="left:270px;top:58px;height:19px;background:#404040"></div>
<div class="num" style="left:271px;top:59.5px;width:82px">33,00</div>
<div class="vl" style="left:354px;top:58px;height:19px;background:#404040"></div>
<div class="num" style="left:355px;top:59.5px;width:82px">0,87</div>
<div class="vl" style="left:438px;top:58px;height:19px;background:#404040"></div>
<div class="num" style="left:439px;top:59.5px;width:83px">38,00</div>
<div class="vl" style="left:523px;top:58px;height:19px;background:#404040"></div>
<div class="num" style="left:524px;top:59.5px;width:82px">0,33</div>
<div class="vl" style="left:607px;top:58px;height:19px;background:#404040"></div>
<div class="num" style="left:608px;top:59.5px;width:83px">8,00</div>
<div class="vl" style="left:692px;top:58px;height:19px;background:#404040"></div>
<div class="num" style="left:693px;top:59.5px;width:82px">0,92</div>
<div class="vl" style="left:776px;top:58px;height:19px;background:#404040"></div>
<div class="num" style="left:777px;top:59.5px;width:83px">22,00</div>
<div class="vl" style="left:861px;top:58px;height:19px;background:#404040"></div>
<div class="num" style="left:862px;top:59.5px;width:82px">0,76</div>
<div class="vl" style="left:945px;top:58px;height:19px;background:#404040"></div>
</div></div>
<div class="hl" style="left:0;top:626px;width:995px;background:#828790"></div>
<div class="vl" style="left:994px;top:50px;height:577px;background:#828790"></div>
<div class="a" style="left:2px;top:630px;width:557px;height:26px;border-top:2px solid #696969;border-left:2px solid #696969;border-right:2px solid #fff;border-bottom:2px solid #fff"></div>
<div class="hl" style="left:2px;top:630px;width:557px;background:#a0a0a0"></div>
<div class="vl" style="left:2px;top:630px;height:26px;background:#a0a0a0"></div>
<div class="t" style="left:9px;top:636px;font-size:13px;letter-spacing:0.096px">Structures: 50 out of 50 rows. Assay data: 12 out of 600 rows. Pivoted data: 1 out of 50 rows.</div>
<div class="hl" style="left:0;top:658px;width:995px;height:1px;background:#c3cfe0"></div><div class="hl" style="left:0;top:659px;width:995px;height:1px;background:#7d9cc4"></div>
</body></html>
